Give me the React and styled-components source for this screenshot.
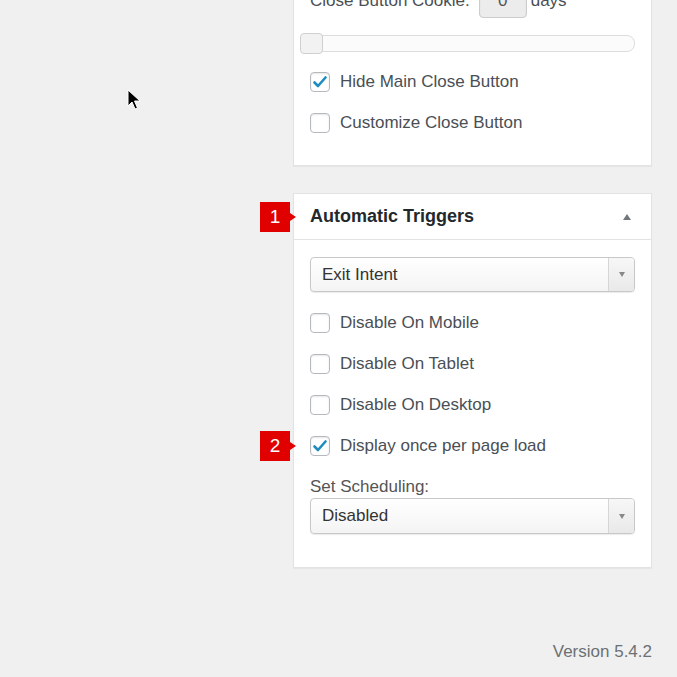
import React from 'react';
import styled, { createGlobalStyle } from 'styled-components';

const GlobalStyle = createGlobalStyle`
  html, body {
    margin: 0;
    padding: 0;
    background: #f0f0f0;
  }
  * {
    box-sizing: border-box;
  }
`;

const Page = styled.div`
  position: relative;
  width: 677px;
  height: 677px;
  overflow: hidden;
  background: #f0f0f0;
  font-family: 'Liberation Sans', Arial, sans-serif;
  font-size: 17px;
  color: #4a4f55;
`;

const Column = styled.div`
  width: 359px;
  margin-left: 293px;
  margin-top: -17px;
`;

const Panel = styled.div`
  background: #fff;
  border: 1px solid #e2e2e2;
  box-shadow: 0 1px 1px rgba(0, 0, 0, 0.04);
  & + & {
    margin-top: 27px;
  }
`;

const PanelHeader = styled.div`
  display: flex;
  align-items: center;
  justify-content: space-between;
  height: 46px;
  padding: 0 20px 0 16px;
  border-bottom: 1px solid #e2e2e2;
`;

const Title = styled.h2`
  position: relative;
  margin: 0;
  font-size: 18px;
  font-weight: 700;
  color: #23282d;
`;

const Caret = styled.span`
  width: 0;
  height: 0;
  border-left: 4.5px solid transparent;
  border-right: 4.5px solid transparent;
  border-bottom: 6px solid #72777c;
`;

const PanelBody = styled.div`
  padding: ${(p) => p.$pad};
`;

const CookieRow = styled.div`
  display: flex;
  align-items: center;
  height: 34px;
`;

const NumberBox = styled.div`
  width: 48px;
  height: 34px;
  margin: 0 4px 0 9px;
  border: 1px solid #ccc;
  border-radius: 4px;
  background: #ececec;
  box-shadow: inset 0 1px 2px rgba(0, 0, 0, 0.07);
  display: flex;
  align-items: center;
  justify-content: center;
  color: #555;
`;

const Slider = styled.div`
  position: relative;
  height: 21px;
  margin: 15px 0 7px -10px;
  display: flex;
  align-items: center;
`;

const Track = styled.div`
  flex: 1;
  height: 17px;
  border: 1px solid #ddd;
  border-radius: 8px;
  background: #fbfbfb;
`;

const Handle = styled.div`
  position: absolute;
  left: 0;
  top: 0;
  width: 23px;
  height: 21px;
  border: 1px solid #d0d0d0;
  border-radius: 4px;
  background: #f2f2f2;
`;

const CheckRow = styled.label`
  position: relative;
  display: flex;
  align-items: center;
  height: 41px;
  gap: 10px;
`;

const Box = styled.span`
  width: 20px;
  height: 20px;
  flex: none;
  border: 1px solid #b4b9be;
  border-radius: 4px;
  background: #fff;
  box-shadow: inset 0 1px 2px rgba(0, 0, 0, 0.1);
  display: flex;
  align-items: center;
  justify-content: center;
`;

const Select = styled.div`
  display: flex;
  height: ${(p) => p.$h}px;
  border: 1px solid #c8c8c8;
  border-radius: 4px;
  background: linear-gradient(#fff, #f4f4f4);
  box-shadow: 0 1px 1px rgba(0, 0, 0, 0.08);
  margin-bottom: ${(p) => p.$mb}px;
  overflow: hidden;
`;

const SelectValue = styled.div`
  flex: 1;
  display: flex;
  align-items: center;
  padding-left: 11px;
  color: #333;
`;

const SelectArrow = styled.div`
  width: 26px;
  border-left: 1px solid #d6d6d6;
  background: linear-gradient(#f7f7f7, #e9e9e9);
  display: flex;
  align-items: center;
  justify-content: center;
  &::after {
    content: '';
    border-left: 3.5px solid transparent;
    border-right: 3.5px solid transparent;
    border-top: 5px solid #888;
  }
`;

const FieldLabel = styled.div`
  height: 20px;
  line-height: 20px;
  margin: 11px 0 1px;
  color: #555;
`;

const Badge = styled.span`
  position: absolute;
  left: -50px;
  top: 50%;
  transform: translateY(-50%);
  width: 30px;
  height: 30px;
  background: #e00000;
  color: #fff;
  font-size: 19px;
  font-weight: 400;
  display: flex;
  align-items: center;
  justify-content: center;
  &::after {
    content: '';
    position: absolute;
    left: 30px;
    top: 50%;
    margin-top: -4px;
    border-top: 4px solid transparent;
    border-bottom: 4px solid transparent;
    border-left: 6px solid #e00000;
  }
`;

const Footer = styled.div`
  width: 359px;
  margin: 74px 0 0 293px;
  text-align: right;
  line-height: 20px;
  color: #6c7073;
`;

const Cursor = styled.svg`
  position: absolute;
  left: 127px;
  top: 89px;
  filter: blur(0.4px);
`;

const Check = () => (
  <svg width="16" height="14" viewBox="0 0 16 14">
    <path d="M2.5 7.5 L6 11 L13.5 2.5" fill="none" stroke="#1e8cbe" strokeWidth="2.6" strokeLinecap="round" strokeLinejoin="round" />
  </svg>
);

const Checkbox = ({ checked, badge, children }) => (
  <CheckRow>
    {badge && <Badge>{badge}</Badge>}
    <Box>{checked && <Check />}</Box>
    {children}
  </CheckRow>
);

export default function App() {
  return (
    <Page>
      <GlobalStyle />
      <Cursor width="16" height="22" viewBox="0 0 16 22">
        <path d="M1 1 L1 17 L5 13 L8 20 L10.5 19 L7.5 12 L13 12 Z" fill="#000" stroke="#fff" strokeWidth="1" />
      </Cursor>
      <Column>
        <Panel>
          <PanelBody $pad="0 16px 22px">
            <CookieRow>
              <span>Close Button Cookie:</span>
              <NumberBox>0</NumberBox>
              <span>days</span>
            </CookieRow>
            <Slider>
              <Track />
              <Handle />
            </Slider>
            <Checkbox checked>Hide Main Close Button</Checkbox>
            <Checkbox>Customize Close Button</Checkbox>
          </PanelBody>
        </Panel>
        <Panel>
          <PanelHeader>
            <Title>
              <Badge>1</Badge>
              Automatic Triggers
            </Title>
            <Caret />
          </PanelHeader>
          <PanelBody $pad="17px 16px 33px">
            <Select $h={35} $mb={10}>
              <SelectValue>Exit Intent</SelectValue>
              <SelectArrow />
            </Select>
            <Checkbox>Disable On Mobile</Checkbox>
            <Checkbox>Disable On Tablet</Checkbox>
            <Checkbox>Disable On Desktop</Checkbox>
            <Checkbox checked badge="2">Display once per page load</Checkbox>
            <FieldLabel>Set Scheduling:</FieldLabel>
            <Select $h={36} $mb={0}>
              <SelectValue>Disabled</SelectValue>
              <SelectArrow />
            </Select>
          </PanelBody>
        </Panel>
      </Column>
      <Footer>Version 5.4.2</Footer>
    </Page>
  );
}
